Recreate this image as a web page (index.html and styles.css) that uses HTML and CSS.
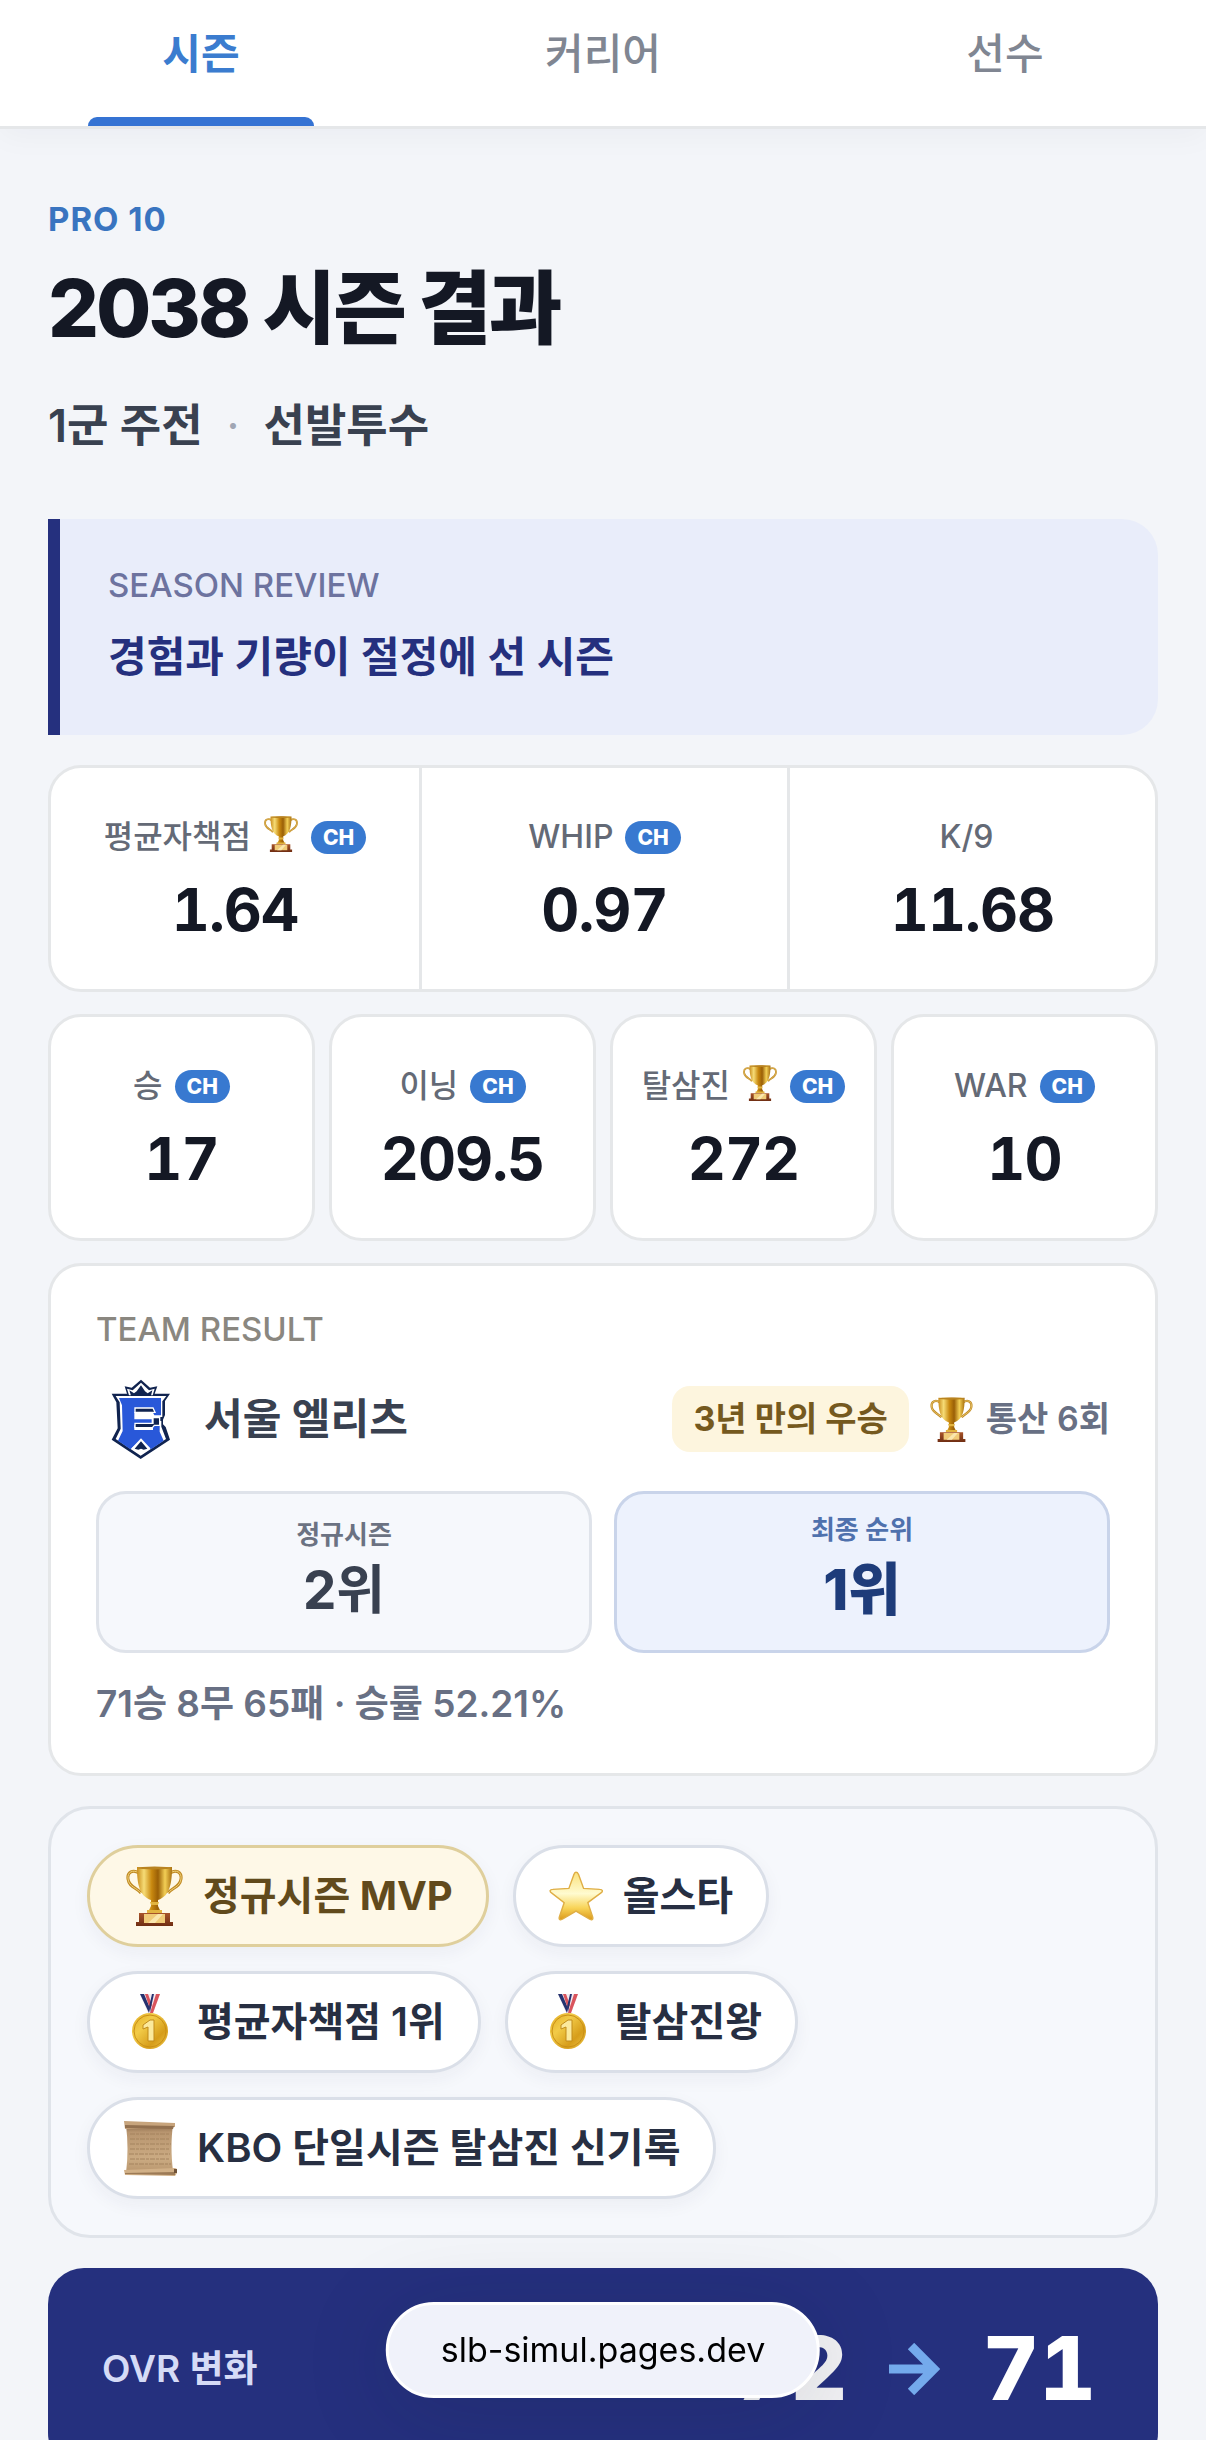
FILE: index.html
```html
<!DOCTYPE html>
<html lang="ko">
<head>
<meta charset="utf-8">
<meta name="viewport" content="width=device-width, initial-scale=1">
<title>2038 시즌 결과</title>
<link rel="stylesheet" href="styles.css">
</head>
<body>
<svg class="sprite" width="0" height="0" aria-hidden="true">
  <defs>
    <linearGradient id="cup" x1="0" x2="1" y1="0" y2="0">
      <stop offset="0" stop-color="#c98d1d"/><stop offset=".2" stop-color="#f6dc76"/><stop offset=".42" stop-color="#c8880f"/><stop offset=".6" stop-color="#9a5f06"/><stop offset=".8" stop-color="#f3cf55"/><stop offset="1" stop-color="#a8700f"/>
    </linearGradient>
    <linearGradient id="wood" x1="0" x2="0" y1="0" y2="1">
      <stop offset="0" stop-color="#a8542a"/><stop offset="1" stop-color="#6f2d12"/>
    </linearGradient>
    <linearGradient id="starfill" x1="0" x2="0" y1="0" y2="1">
      <stop offset="0" stop-color="#fbe27c"/><stop offset=".45" stop-color="#fffbd0"/><stop offset=".75" stop-color="#f8d458"/><stop offset="1" stop-color="#dc9a1c"/>
    </linearGradient>
    <linearGradient id="coin" x1="0" x2="1" y1="0" y2="1">
      <stop offset="0" stop-color="#e3ad22"/><stop offset=".35" stop-color="#f2cb48"/><stop offset=".7" stop-color="#d69d1a"/><stop offset="1" stop-color="#f0c94c"/>
    </linearGradient>
    <linearGradient id="paper" x1="0" x2="0" y1="0" y2="1">
      <stop offset="0" stop-color="#8b6b4c"/><stop offset=".15" stop-color="#b8956f"/><stop offset=".7" stop-color="#cbab83"/><stop offset="1" stop-color="#b8956c"/>
    </linearGradient>
  </defs>
  <symbol id="trophy" viewBox="0 0 57 60">
    <path d="M13 7C7 3 1 6 2 13c1 8 9 9 13 14M44 7c6-4 12-1 11 6-1 8-9 9-13 14" fill="none" stroke="#c08a24" stroke-width="3"/>
    <path d="M13 7C7 3 1 6 2 13c1 8 9 9 13 14M44 7c6-4 12-1 11 6-1 8-9 9-13 14" fill="none" stroke="#f0d27a" stroke-width="1"/>
    <path d="M11 1h35c0 16-2 29-14 33v6l3 6H22l3-6v-6C13 30 11 17 11 1z" fill="url(#cup)"/>
    <ellipse cx="28.500" cy="2" rx="17" ry="1.500" fill="#b98320"/>
    <path d="M24 36h9l-1 3h-7zM21 44h15v3H21z" fill="#e2b440"/>
    <path d="M13 47h31v9h3v4H10v-4h3z" fill="url(#wood)"/>
    <path d="M18 48h21v9H18z" fill="#f0cb78"/><path d="M22 57l10-9h5l-8 9z" fill="#fae7ae"/>
  </symbol>
  <symbol id="star" viewBox="0 0 57 54">
    <path d="M28.500 2c2 0 2 1 3 3l5 14 17 1c3 0 4 2 1 4L41 34l5 15c1 3-1 4-4 2l-13.500-8L15 51c-3 2-5 1-4-2l5-15L3 24c-3-2-2-4 1-4l17-1 5-14c1-2 1-3 2.500-3z" fill="url(#starfill)" stroke="#dfae45" stroke-width="1.500"/>
  </symbol>
  <symbol id="medal" viewBox="0 0 54 56">
    <path d="M17 0h20l-7 19h-5z" fill="#f5eaf0"/>
    <path d="M17 0h4l6 14-1 5z" fill="#25326f"/><path d="M22 0h3l4 11-2 4z" fill="#d9545c"/>
    <path d="M37 0h-4l-6 19h3z" fill="#d9545c"/><path d="M31 0h-2l-3 13 1 5z" fill="#25326f"/>
    <circle cx="27" cy="37" r="18" fill="url(#coin)"/><circle cx="27" cy="37" r="16" fill="none" stroke="#c98f16" stroke-width="1"/>
    <path d="M20 31l7-5h4v21h-6V33l-5 2z" fill="#fbe99c" stroke="#c18b1b" stroke-width="1"/>
  </symbol>
  <symbol id="scroll" viewBox="0 0 54 56">
    <path d="M3 5h47c-2 14-2 30 0 46l-47 2c2-16 2-32 0-48z" fill="url(#paper)"/>
    <path d="M7 14h40M7 19h40M7 24h41M7 29h40M6 34h41M7 39h40M6 44h42" stroke="#a4835e" stroke-width="1" stroke-dasharray="5 1 3 1"/>
    <path d="M1 1l51 2v4L2 9z" fill="#c7a47c"/><path d="M2 5l49 1-1 3L2 8z" fill="#92704f"/>
    <path d="M1 50l51-2 2 1v4l-2 3-50-1z" fill="#d1b087"/><path d="M2 53l50-1v3L2 54z" fill="#9c7a56"/><path d="M51 49h3v4h-3z" fill="#705338"/>
  </symbol>
  <symbol id="emblem" viewBox="16 16 180 248">
    <path d="M18 64h46l-7-22 21 4 28-24 27 24 22-4-8 22h46l-15 22v42l-6 14v14l8 8 13 38-88 58-87-58 18-34-4-78z" fill="#10234f"/>
    <path d="M64 49l17 5 25-23 24 23 17-5-6 20H70z" fill="#fff"/>
    <path d="M71 54l14 9 8-6 13-18 12 18 8 6 14-9-5 20H77z" fill="#10234f"/>
    <path d="M30 71h152l-12 16v47h-24l5 12h16v17l14 37-76 50-75-50 15-31-3-79z" fill="#fff"/>
    <path d="M40 77h126v52h-20l-5-10H86v22h52v18H86v14h56v-13h20v18l12 27-38 26-31-28-31 28-37-26 14-29-2-77z" fill="#2958d9"/>
    <path d="M88 107h54l6 13H88z" fill="#10234f" stroke="#fff" stroke-width="4"/>
    <path d="M142 136v17H88v13h52l6-7h16v-23z" fill="#10234f" stroke="#fff" stroke-width="4"/>
    <path d="M78 228l28-30 28 30-28 20z" fill="#fff"/>
    <path d="M106 207l19 22-11 3-8-3-8 3-11-3z" fill="#10234f"/>
  </symbol>
</svg>

<div class="app">
  <nav class="tabs" aria-label="주요 메뉴">
    <button class="tab tab-active" type="button" aria-current="page">시즌</button>
    <button class="tab" type="button">커리어</button>
    <button class="tab" type="button">선수</button>
  </nav>

  <main class="content">
    <header class="heading">
      <p class="eyebrow">PRO 10</p>
      <h1 class="title">2038 시즌 결과</h1>
      <p class="role"><span>1군 주전</span><span class="dot">·</span><span>선발투수</span></p>
    </header>

    <section class="review">
      <h2 class="overline">SEASON REVIEW</h2>
      <p class="review-text">경험과 기량이 절정에 선 시즌</p>
    </section>

    <section class="stats">
      <dl class="rates">
        <div class="stat"><dt>평균자책점 <span class="marks"><svg class="mini-trophy"><use href="#trophy"/></svg><span class="badge">CH</span></span></dt><dd>1.64</dd></div>
        <div class="stat"><dt>WHIP <span class="marks"><span class="badge">CH</span></span></dt><dd>0.97</dd></div>
        <div class="stat"><dt>K/9 <span class="marks"></span></dt><dd>11.68</dd></div>
      </dl>
      <dl class="totals">
        <div class="stat"><dt>승 <span class="marks"><span class="badge">CH</span></span></dt><dd>17</dd></div>
        <div class="stat"><dt>이닝 <span class="marks"><span class="badge">CH</span></span></dt><dd>209.5</dd></div>
        <div class="stat"><dt>탈삼진 <span class="marks"><svg class="mini-trophy"><use href="#trophy"/></svg><span class="badge">CH</span></span></dt><dd>272</dd></div>
        <div class="stat"><dt>WAR <span class="marks"><span class="badge">CH</span></span></dt><dd>10</dd></div>
      </dl>

      <section class="team">
        <h2 class="overline">TEAM RESULT</h2>
        <div class="team-row">
          <svg class="emblem" role="img" aria-label="서울 엘리츠"><use href="#emblem"/></svg>
          <h3 class="team-name">서울 엘리츠</h3>
          <span class="drought">3년 만의 우승</span>
          <span class="titles"><svg class="title-trophy"><use href="#trophy"/></svg>통산 6회</span>
        </div>
        <dl class="ranks">
          <div class="rank"><dt>정규시즌</dt><dd>2위</dd></div>
          <div class="rank rank-final"><dt>최종 순위</dt><dd>1위</dd></div>
        </dl>
        <p class="record">71승 8무 65패 · 승률 52.21%</p>
      </section>
    </section>

    <ul class="awards">
      <li class="award award-mvp"><svg class="award-icon"><use href="#trophy"/></svg>정규시즌 MVP</li>
      <li class="award"><svg class="award-icon"><use href="#star"/></svg>올스타</li>
      <li class="award"><svg class="award-icon"><use href="#medal"/></svg>평균자책점 1위</li>
      <li class="award"><svg class="award-icon"><use href="#medal"/></svg>탈삼진왕</li>
      <li class="award"><svg class="award-icon"><use href="#scroll"/></svg>KBO 단일시즌 탈삼진 신기록</li>
    </ul>

    <section class="ovr">
      <h2 class="ovr-label">OVR 변화</h2>
      <p class="ovr-values"><span class="ovr-before">72</span>
        <svg class="arrow" viewBox="0 0 51 52" role="img" aria-label="에서"><path d="M0 26h46M22 3l23 23-23 23" fill="none" stroke="#74aaec" stroke-width="9"/></svg>
        <span>71</span></p>
    </section>
  </main>

  <button class="address" type="button">slb-simul.pages.dev</button>
</div>
</body>
</html>
```
FILE: styles.css
```css
* { box-sizing: border-box; }

body, h1, h2, h3, p, dl, dd, ul { margin: 0; }

body {
  background: #f3f5f9;
  color: #141824;
  font-family: Inter, "Noto Sans CJK KR", sans-serif;
}

button { border: 0; font-family: inherit; }

.sprite { position: absolute; }

.app {
  display: flex;
  flex-direction: column;
  height: 100vh;
}

.tabs {
  display: grid;
  grid-template-columns: repeat(3, 1fr);
  flex: none;
  background: #fff;
  border-bottom: 3px solid #e5e7e9;
  box-shadow: 0 6px 30px rgba(20, 24, 40, .04);
  z-index: 1;
}

.tab {
  display: flex;
  flex-direction: column;
  align-items: center;
  padding: 24px 0 0;
  background: none;
  color: #808692;
  font-size: 42px;
  font-weight: 500;
  line-height: 60px;
}

.tab::after {
  content: "";
  width: 56%;
  height: 9px;
  margin-top: 33px;
  border-radius: 9px 9px 0 0;
}

.tab-active { color: #3b7ccf; font-weight: 700; }
.tab-active::after { background: #3573d3; }

.content {
  display: flex;
  flex-direction: column;
  flex: 1;
  gap: 30px;
  min-height: 0;
  padding: 72px 48px;
  overflow-y: auto;
  scrollbar-width: none;
}

.content > * { flex: none; }

.heading { padding-bottom: 33px; }

.eyebrow {
  color: #3974c0;
  font-size: 33px;
  font-weight: 700;
  letter-spacing: 1px;
  line-height: 36px;
}

.title {
  margin-top: 18px;
  font-size: 80px;
  font-weight: 800;
  letter-spacing: -3px;
  line-height: 105px;
}

.role {
  display: flex;
  gap: 24px;
  margin-top: 36px;
  color: #394150;
  font-size: 45px;
  font-weight: 600;
  line-height: 60px;
}

.dot { color: #a0a6b4; font-weight: 400; }

.overline {
  color: #8a8780;
  font-size: 33px;
  font-weight: 500;
  line-height: 42px;
}

.review {
  padding: 45px 48px;
  background: #e9edfa;
  border-left: 12px solid #25307e;
  border-radius: 0 36px 36px 0;
}

.review .overline { color: #6d739f; }

.review-text {
  margin-top: 18px;
  color: #25307e;
  font-size: 42px;
  font-weight: 600;
  line-height: 66px;
}

.stats { display: grid; gap: 22px; }

.rates, .totals { display: grid; text-align: center; }

.rates {
  grid-template-columns: repeat(3, 1fr);
  background: #fff;
  border: 3px solid #e5e7e9;
  border-radius: 33px;
}

.rates .stat + .stat { border-left: 3px solid #e5e7e9; }

.totals { grid-template-columns: repeat(4, 1fr); gap: 14px; }

.totals .stat {
  background: #fff;
  border: 3px solid #e5e7e9;
  border-radius: 33px;
}

.stat { padding: 45px 0 42px; }

.stat dt {
  display: flex;
  align-items: center;
  justify-content: center;
  gap: 12px;
  color: #646a76;
  font-size: 32px;
  font-weight: 500;
  line-height: 48px;
}

.stat dd {
  margin-top: 12px;
  font-size: 59px;
  font-variant-numeric: tabular-nums;
  font-weight: 700;
  letter-spacing: -1px;
  line-height: 74px;
}

.marks { display: flex; align-items: center; gap: 12px; }

.mini-trophy { width: 36px; height: 36px; margin-bottom: 6px; }

.badge {
  padding: 0 12px;
  background: #3879d0;
  border-radius: 18px;
  color: #fff;
  font-size: 21px;
  font-weight: 800;
  line-height: 33px;
}

.team {
  padding: 42px 45px;
  background: #fff;
  border: 3px solid #e5e7e9;
  border-radius: 33px;
}

.team-row {
  display: flex;
  align-items: center;
  margin-top: 27px;
}

.emblem { width: 60px; height: 84px; margin: 0 33px 0 15px; }

.team-name {
  flex: 1;
  color: #394150;
  font-size: 42px;
  font-weight: 600;
  line-height: 60px;
}

.drought {
  padding: 0 21px;
  background: #fdf5de;
  border-radius: 18px;
  color: #75591e;
  font-size: 34px;
  font-weight: 700;
  line-height: 66px;
}

.titles {
  display: flex;
  align-items: center;
  gap: 12px;
  margin-left: 20px;
  color: #687084;
  font-size: 34px;
  font-weight: 600;
  line-height: 66px;
}

.title-trophy { width: 45px; height: 45px; }

.ranks {
  display: grid;
  grid-template-columns: 1fr 1fr;
  gap: 22px;
  margin-top: 30px;
}

.rank {
  padding: 21px 0 24px;
  background: #f6f8fc;
  border: 3px solid #dfe3ea;
  border-radius: 30px;
  text-align: center;
}

.rank dt {
  color: #6b7282;
  font-size: 26px;
  font-weight: 600;
  line-height: 39px;
}

.rank dd {
  color: #394150;
  font-size: 53px;
  font-weight: 700;
  line-height: 72px;
}

.rank-final { padding: 16px 0 20px; background: #edf2fd; border-color: #c9d4ea; }
.rank-final dt { color: #4f71ad; }
.rank-final dd { color: #1e3c7a; font-size: 57px; font-weight: 800; line-height: 81px; }

.record {
  margin-top: 24px;
  color: #687084;
  font-size: 37px;
  font-weight: 600;
  line-height: 54px;
}

.awards {
  display: flex;
  flex-wrap: wrap;
  gap: 24px;
  padding: 36px;
  background: #f6f8fc;
  border: 3px solid #e0e4ea;
  border-radius: 42px;
  list-style: none;
}

.award {
  display: flex;
  align-items: center;
  gap: 20px;
  height: 102px;
  padding: 0 33px;
  background: #fff;
  border: 3px solid #dadfe8;
  border-radius: 51px;
  box-shadow: 0 6px 18px rgba(30, 40, 70, .05);
  color: #272f42;
  font-size: 40px;
  font-weight: 600;
  line-height: 60px;
}

.award-mvp {
  padding: 0 33px 0 36px;
  background: #fef8e7;
  border-color: #dfcf9c;
  color: #614a1c;
  font-weight: 700;
}

.award-icon { width: 54px; height: 56px; }
.award-mvp .award-icon { width: 57px; height: 60px; }

.ovr {
  display: flex;
  align-items: center;
  justify-content: space-between;
  padding: 51px 62px 51px 54px;
  background: #25307e;
  border-radius: 36px;
}

.ovr-label {
  color: #d5dbf6;
  font-size: 37px;
  font-weight: 600;
  line-height: 60px;
}

.ovr-values {
  display: flex;
  align-items: center;
  gap: 42px;
  color: #fff;
  font-size: 88px;
  font-variant-numeric: tabular-nums;
  font-weight: 800;
  line-height: 99px;
}

.ovr-before { color: #f2f2f4; }

.arrow { width: 51px; height: 52px; }

.address {
  position: fixed;
  bottom: 42px;
  left: 50%;
  z-index: 2;
  padding: 0 52px;
  transform: translateX(-50%);
  background: #f0f2fa;
  border: 3px solid #fff;
  border-radius: 48px;
  box-shadow: 0 12px 90px rgba(20, 24, 50, .15);
  color: #000;
  font-size: 34px;
  font-weight: 400;
  line-height: 90px;
}
```
